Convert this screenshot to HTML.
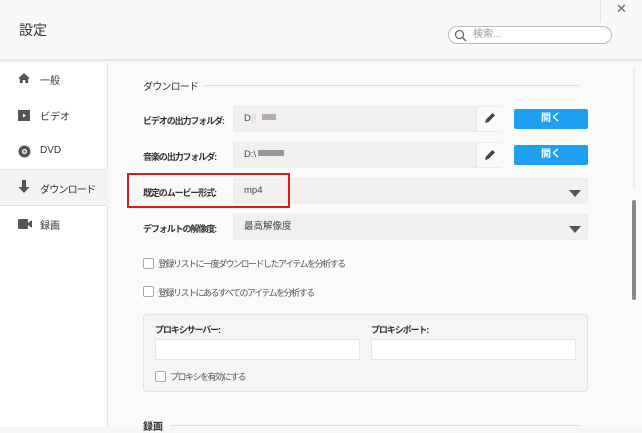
<!DOCTYPE html>
<html><head><meta charset="utf-8"><style>
*{margin:0;padding:0;box-sizing:border-box}
body{width:642px;height:427px;overflow:hidden;background:#f7f7f7;font-family:"Liberation Sans","Noto Sans CJK JP",sans-serif;position:relative;color:#333}
.abs{position:absolute}
.hdr{left:0;top:0;width:642px;height:61px;background:#f9f9f9;border-bottom:2px solid #e6e6e6}
.title{left:19px;top:20px;font-size:14px;color:#333}
.close{left:600px;top:0;width:42px;height:22px;border-left:1px solid #e4e4e4;text-align:center;font-size:13px;color:#666;line-height:18px;font-weight:300}
.search{left:448px;top:26px;width:164px;height:18px;border:1px solid #bbb;border-radius:9px;background:#fff;font-size:10px;color:#999;line-height:16px;padding-left:24px}
.side{background:#fff;border-right:1px solid #e2e2e2}
.item{left:18px;font-size:10px;color:#333}
.main{left:109px;top:63px;width:533px;height:364px;background:#fafafa}
.lab{font-size:9px;font-weight:bold;color:#333;left:143px;letter-spacing:-1.1px;white-space:nowrap}
.field{left:233px;height:26px;background:#f0f0f0;border:1px solid #ebebeb;border-radius:2px;font-size:9.5px;color:#444;line-height:24px;padding-left:10px}
.btn{left:514px;width:74px;height:20px;background:#1ea0f0;color:#fff;font-size:10px;text-align:center;line-height:20px;border-radius:2px;font-weight:bold}
.pen{left:476px;width:26px;height:24px;background:#fafafa;border-left:1px solid #e6e6e6}
.tri{width:0;height:0;border-left:6px solid transparent;border-right:6px solid transparent;border-top:7px solid #555}
.cb{width:11px;height:11px;border:1px solid #aaa;border-radius:2px;background:#fff}
.ct{font-size:9px;color:#555;letter-spacing:-1.5px;white-space:nowrap}
</style></head><body>
<div class="abs hdr"></div>
<div class="abs title">設定</div>
<div class="abs close">✕</div>
<div class="abs search">検索...</div>
<svg class="abs" style="left:454px;top:29px" width="13" height="13"><circle cx="5.5" cy="5.5" r="4" fill="none" stroke="#666" stroke-width="1.3"/><line x1="8.5" y1="8.5" x2="12" y2="12" stroke="#666" stroke-width="1.5"/></svg>

<div class="abs side" style="left:0;top:63px;width:108px;height:107px;border-bottom:1px solid #e2e2e2;border-radius:0 0 3px 0"></div>
<div class="abs" style="left:0;top:170px;width:108px;height:35px;background:#f4f4f4"></div>
<div class="abs side" style="left:0;top:205px;width:108px;height:222px;border-top:1px solid #e2e2e2;border-radius:0 3px 0 0"></div>

<svg class="abs" style="left:18px;top:72px" width="12" height="12"><path d="M6 1L0 6.5h1.8V11h3V8h2.4v3h3V6.5H12z" fill="#555"/></svg>
<div class="abs item" style="left:40px;top:72px">一般</div>
<svg class="abs" style="left:18px;top:110px" width="12" height="11"><rect x="0" y="0" width="12" height="11" fill="#555"/><path d="M5 3.5v4l3-2z" fill="#fff"/></svg>
<div class="abs item" style="left:40px;top:108px">ビデオ</div>
<svg class="abs" style="left:18px;top:145px" width="13" height="13"><circle cx="6.5" cy="6.5" r="6" fill="#555"/><circle cx="6.5" cy="6.5" r="2.5" fill="#fff"/><circle cx="6.5" cy="6.5" r="1.2" fill="#555"/></svg>
<div class="abs item" style="left:40px;top:145px">DVD</div>
<svg class="abs" style="left:18px;top:180px" width="12" height="14"><path d="M4 0h4v7h3.5L6 13 0.5 7H4z" fill="#555"/></svg>
<div class="abs item" style="left:40px;top:181px;letter-spacing:-0.8px">ダウンロード</div>
<svg class="abs" style="left:18px;top:219px" width="14" height="10"><rect x="0" y="0" width="10" height="10" rx="1" fill="#555"/><path d="M10 4l4-3v8l-4-3z" fill="#555"/></svg>
<div class="abs item" style="left:40px;top:217px">録画</div>

<div class="abs main"></div>
<div class="abs" style="left:633px;top:68px;width:2px;height:120px;background:#eee"></div>
<div class="abs" style="left:632px;top:200px;width:4px;height:100px;background:#888;border-radius:2px"></div>

<div class="abs" style="left:143px;top:78px;font-size:10px;letter-spacing:-0.8px">ダウンロード</div>
<div class="abs" style="left:204px;top:85px;width:375px;height:1px;background:#ddd"></div>

<div class="abs lab" style="top:114px">ビデオの出力フォルダ:</div>
<div class="abs field" style="top:106px;width:269px">D:</div>
<div class="abs" style="left:252px;top:113px;width:4px;height:10px;background:#e6e6e6"></div>
<div class="abs" style="left:262px;top:114px;width:14px;height:6px;background:#b8aab0"></div>
<div class="abs pen" style="top:107px"></div>
<svg class="abs" style="left:484px;top:112px" width="12" height="12"><path d="M1 11l1-3.5L8.5 1 11 3.5 4.5 10z" fill="#444"/></svg>
<div class="abs btn" style="top:109px">開く</div>

<div class="abs lab" style="top:150px">音楽の出力フォルダ:</div>
<div class="abs field" style="top:142px;width:269px">D:\</div>
<div class="abs" style="left:258px;top:150px;width:26px;height:6px;background:#999"></div>
<div class="abs pen" style="top:143px"></div>
<svg class="abs" style="left:484px;top:149px" width="12" height="12"><path d="M1 11l1-3.5L8.5 1 11 3.5 4.5 10z" fill="#444"/></svg>
<div class="abs btn" style="top:145px">開く</div>

<div class="abs lab" style="top:186px">既定のムービー形式:</div>
<div class="abs field" style="top:178px;width:355px">mp4</div>
<div class="abs tri" style="left:569px;top:190px"></div>
<div class="abs" style="left:127px;top:173px;width:163px;height:35px;border:2px solid #e8141b"></div>

<div class="abs lab" style="top:222px">デフォルトの解像度:</div>
<div class="abs field" style="top:214px;width:355px">最高解像度</div>
<div class="abs tri" style="left:569px;top:226px"></div>

<div class="abs cb" style="left:143px;top:258px"></div>
<div class="abs ct" style="left:158px;top:257px">登録リストに一度ダウンロードしたアイテムを分析する</div>
<div class="abs cb" style="left:143px;top:286px"></div>
<div class="abs ct" style="left:158px;top:286px">登録リストにあるすべてのアイテムを分析する</div>

<div class="abs" style="left:143px;top:314px;width:445px;height:78px;border:1px solid #e2e2e2;border-radius:4px;background:#f5f5f5"></div>
<div class="abs lab" style="left:155px;top:323px">プロキシサーバー:</div>
<div class="abs lab" style="left:371px;top:323px">プロキシポート:</div>
<div class="abs" style="left:155px;top:339px;width:205px;height:21px;background:#fff;border:1px solid #e6e6e6"></div>
<div class="abs" style="left:371px;top:339px;width:205px;height:21px;background:#fff;border:1px solid #e6e6e6"></div>
<div class="abs cb" style="left:155px;top:371px"></div>
<div class="abs ct" style="left:170px;top:370px">プロキシを有効にする</div>

<div class="abs" style="left:143px;top:418px;font-size:10px;font-weight:bold">録画</div>
<div class="abs" style="left:170px;top:425px;width:410px;height:1px;background:#ddd"></div>
</body></html>
